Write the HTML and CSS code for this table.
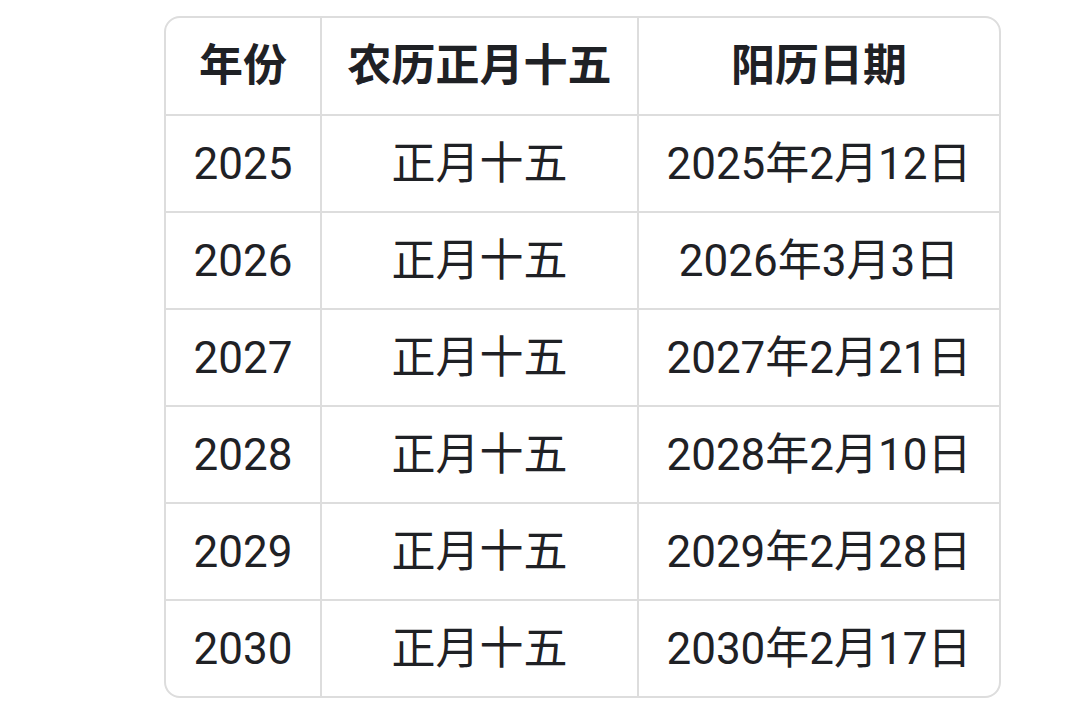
FILE: index.html
```html
<!DOCTYPE html>
<html lang="zh-CN">
<head>
<meta charset="utf-8">
<link rel="stylesheet" href="styles.css">
</head>
<body>
<div class="table-wrap">
<table class="lantern-table">
<colgroup>
<col class="c1"><col class="c2"><col class="c3">
</colgroup>
<thead>
<tr><th>年份</th><th>农历正月十五</th><th>阳历日期</th></tr>
</thead>
<tbody>
<tr><td>2025</td><td>正月十五</td><td>2025年2月12日</td></tr>
<tr><td>2026</td><td>正月十五</td><td>2026年3月3日</td></tr>
<tr><td>2027</td><td>正月十五</td><td>2027年2月21日</td></tr>
<tr><td>2028</td><td>正月十五</td><td>2028年2月10日</td></tr>
<tr><td>2029</td><td>正月十五</td><td>2029年2月28日</td></tr>
<tr><td>2030</td><td>正月十五</td><td>2030年2月17日</td></tr>
</tbody>
</table>
</div>
</body>
</html>
```
FILE: styles.css
```css
html, body {
  margin: 0;
  padding: 0;
  background: #ffffff;
}
body {
  padding: 16px 0 0 164px;
  font-family: Roboto, "Noto Sans CJK SC", sans-serif;
  color: #1f2125;
}
.table-wrap {
  width: 837px;
  box-sizing: border-box;
  border: 2px solid #dddddd;
  border-radius: 16px;
  overflow: hidden;
}
.lantern-table {
  width: 100%;
  border-collapse: collapse;
  table-layout: fixed;
}
.c1 { width: 155px; }
.c2 { width: 317px; }
.lantern-table th,
.lantern-table td {
  border-right: 2px solid #dddddd;
  border-bottom: 2px solid #dddddd;
  text-align: center;
  vertical-align: middle;
  font-size: 44px;
  padding: 0;
  height: 95px;
  line-height: 1;
}
.lantern-table th {
  font-weight: 700;
  height: 96px;
}
.lantern-table td {
  font-weight: 400;
}
.lantern-table tr > :last-child {
  border-right: none;
}
.lantern-table tbody tr:last-child td {
  border-bottom: none;
}
```
